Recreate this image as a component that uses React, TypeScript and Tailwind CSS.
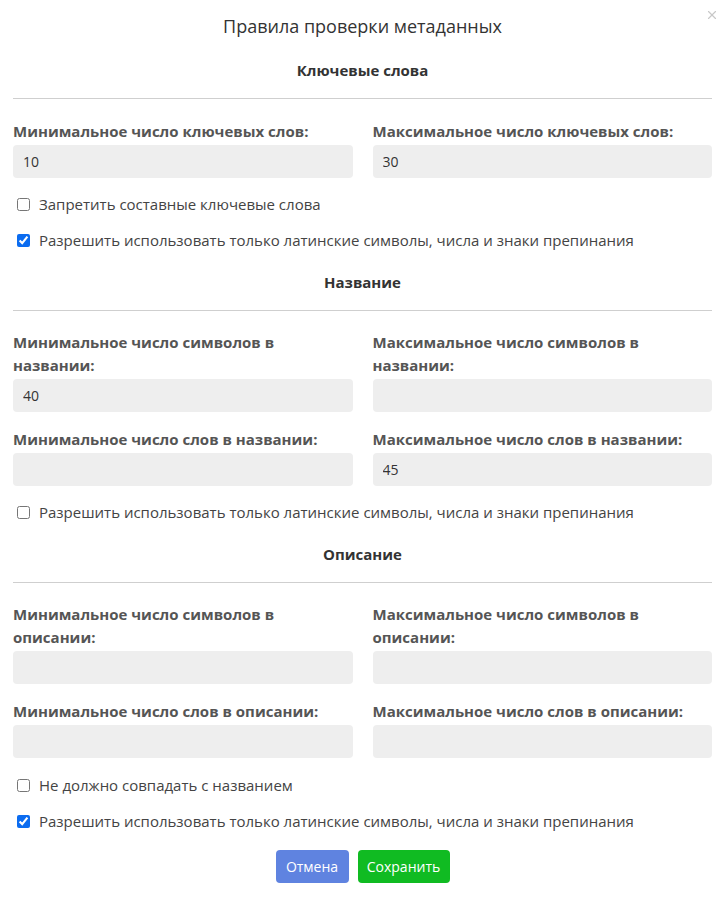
import { X } from 'lucide-react';

type Field = { label: string; value: string };

function NumberField({ label, value }: Field) {
  return (
    <div className="flex flex-col">
      <label className="text-[15px] leading-[23px] font-bold text-[#555]">{label}</label>
      <input
        type="text"
        defaultValue={value}
        className="mt-[2px] h-[33px] w-full rounded-[4px] bg-[#eeeeee] px-[10px] text-[14px] text-[#333] outline-none"
      />
    </div>
  );
}

function Check({ label, checked }: { label: string; checked?: boolean }) {
  return (
    <label className="flex h-[22px] items-center pl-[4px] text-[15px] text-[#444]">
      <input type="checkbox" defaultChecked={checked} className="m-0 h-[13px] w-[13px] accent-[#0b6cf0]" />
      <span className="ml-[9px]">{label}</span>
    </label>
  );
}

function Section({ title }: { title: string }) {
  return (
    <>
      <h3 className="text-center text-[15px] leading-[22px] font-bold text-[#333]">{title}</h3>
      <hr className="mt-[17px] border-0 border-t border-[#cfcfcf]" />
    </>
  );
}

export default function App() {
  return (
    <div className="relative min-h-[906px] bg-white px-[13px] font-['Open_Sans',sans-serif]">
      <button className="absolute top-[8px] right-[6px] text-[#c8c8c8]">
        <X size={14} strokeWidth={2} />
      </button>

      {/* Header */}
      <h2 className="pt-[14px] text-center text-[18px] leading-[24px] text-[#333]">Правила проверки метаданных</h2>

      {/* Keywords */}
      <div className="mt-[21px]">
        <Section title="Ключевые слова" />
      </div>
      <div className="mt-[21px] grid grid-cols-2 gap-x-[20px]">
        <NumberField label="Минимальное число ключевых слов:" value="10" />
        <NumberField label="Максимальное число ключевых слов:" value="30" />
      </div>
      <div className="mt-[15px] flex flex-col gap-[14px]">
        <Check label="Запретить составные ключевые слова" />
        <Check label="Разрешить использовать только латинские символы, числа и знаки препинания" checked />
      </div>

      {/* Title */}
      <div className="mt-[20px]">
        <Section title="Название" />
      </div>
      <div className="mt-[20px] grid grid-cols-2 gap-x-[20px] gap-y-[16px]">
        <NumberField label="Минимальное число символов в названии:" value="40" />
        <NumberField label="Максимальное число символов в названии:" value="" />
        <NumberField label="Минимальное число слов в названии:" value="" />
        <NumberField label="Максимальное число слов в названии:" value="45" />
      </div>
      <div className="mt-[15px]">
        <Check label="Разрешить использовать только латинские символы, числа и знаки препинания" />
      </div>

      {/* Description */}
      <div className="mt-[20px]">
        <Section title="Описание" />
      </div>
      <div className="mt-[20px] grid grid-cols-2 gap-x-[20px] gap-y-[16px]">
        <NumberField label="Минимальное число символов в описании:" value="" />
        <NumberField label="Максимальное число символов в описании:" value="" />
        <NumberField label="Минимальное число слов в описании:" value="" />
        <NumberField label="Максимальное число слов в описании:" value="" />
      </div>
      <div className="mt-[16px] flex flex-col gap-[14px]">
        <Check label="Не должно совпадать с названием" />
        <Check label="Разрешить использовать только латинские символы, числа и знаки препинания" checked />
      </div>

      {/* Footer */}
      <div className="mt-[18px] flex justify-center gap-[9px]">
        <button className="h-[33px] w-[73px] rounded-[4px] bg-[#5f83e0] text-[14px] text-white">Отмена</button>
        <button className="h-[33px] w-[92px] rounded-[4px] bg-[#10bb22] text-[14px] text-white">Сохранить</button>
      </div>
    </div>
  );
}
